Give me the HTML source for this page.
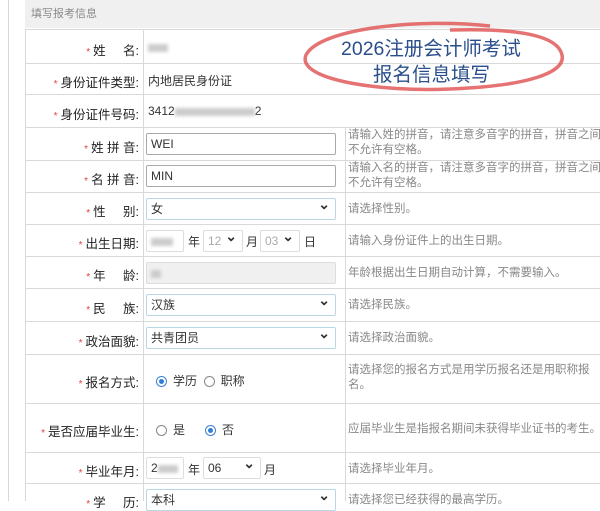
<!DOCTYPE html>
<html><head><meta charset="utf-8"><style>
body{margin:0;width:600px;height:501px;overflow:hidden;background:#fff;font-family:"Liberation Sans","Noto Sans CJK SC",sans-serif;font-size:12px;color:#333;position:relative}
.abs{position:absolute}
.hdr{left:25px;top:0;width:575px;height:28px;background:#f0f0f0;color:#8a8a8a;font-size:11px;line-height:28px;padding-left:6px;box-sizing:border-box}
.vl{position:absolute;width:1px;background:#d9d9d9}
.hl{position:absolute;left:25px;width:575px;height:1px;background:#d9d9d9}
.lab{position:absolute;left:25px;width:114px;text-align:right;color:#222;font-size:12.5px}
.lab b{color:#e04040;font-weight:normal;font-size:10px;margin-right:3px}
.val{position:absolute;left:148px}
.hint{position:absolute;left:348px;color:#888;font-size:11.5px;line-height:15px;width:264px}
.inp{position:absolute;left:146px;width:190px;height:22px;border:1px solid #aaa;border-radius:2px;box-sizing:border-box;padding-left:4px;line-height:20px;background:#fff}
.sel{border-color:#b8d8e8}
.sel:after{content:"⌄";position:absolute;right:5px;top:-5px;font-size:14px;font-weight:bold;color:#333}
.blur{display:inline-block;background:#ccc;filter:blur(1.5px);height:8px;vertical-align:middle}
.rad{display:inline-block;width:11px;height:11px;border:1px solid #888;border-radius:50%;vertical-align:middle;box-sizing:border-box;position:relative;margin-right:6px}
.rad.on{border-color:#3b82d0}
.rad.on:after{content:"";position:absolute;left:2px;top:2px;width:5px;height:5px;border-radius:50%;background:#2f7fd6}
</style></head><body>
<div class="vl" style="left:8px;top:0;height:501px"></div>
<div class="abs hdr">填写报考信息</div>
<div class="vl" style="left:25px;top:29px;height:472px"></div>
<div class="vl" style="left:143px;top:29px;height:472px"></div>
<div class="vl" style="left:345px;top:127px;height:374px"></div>
<div class="hl" style="top:29px"></div><div class="hl" style="top:63px"></div><div class="hl" style="top:94px"></div><div class="hl" style="top:127px"></div><div class="hl" style="top:160px"></div><div class="hl" style="top:192px"></div><div class="hl" style="top:224px"></div><div class="hl" style="top:256px"></div><div class="hl" style="top:288px"></div><div class="hl" style="top:321px"></div><div class="hl" style="top:354px"></div><div class="hl" style="top:403px"></div><div class="hl" style="top:452px"></div><div class="hl" style="top:483px"></div>

<div class="lab" style="top:40px"><b>*</b>姓&nbsp;&nbsp;&nbsp;&nbsp;&nbsp;名:</div><div class="val" style="top:40px"><span class="blur" style="width:20px"></span></div>
<div class="lab" style="top:72px"><b>*</b>身份证件类型:</div><div class="val" style="top:72px">内地居民身份证</div>
<div class="lab" style="top:104px"><b>*</b>身份证件号码:</div><div class="val" style="top:104px">3412<span class="blur" style="width:80px"></span>2</div>

<div class="lab" style="top:137px"><b>*</b>姓 拼 音:</div><div class="inp" style="top:133px">WEI</div><div class="hint" style="top:128px">请输入姓的拼音，请注意多音字的拼音，拼音之间不允许有空格。</div>
<div class="lab" style="top:169px"><b>*</b>名 拼 音:</div><div class="inp" style="top:165px">MIN</div><div class="hint" style="top:161px">请输入名的拼音，请注意多音字的拼音，拼音之间不允许有空格。</div>
<div class="lab" style="top:201px"><b>*</b>性&nbsp;&nbsp;&nbsp;&nbsp;&nbsp;别:</div><div class="inp sel" style="top:198px">女</div><div class="hint" style="top:202px">请选择性别。</div>
<div class="lab" style="top:233px"><b>*</b>出生日期:</div>
<div class="inp" style="top:230px;width:38px;border-color:#ddd"><span class="blur" style="width:22px"></span></div>
<div class="abs" style="left:188px;top:233px">年</div>
<div class="inp sel" style="top:230px;left:203px;width:40px;color:#aaa;border-color:#ddd">12</div>
<div class="abs" style="left:246px;top:233px">月</div>
<div class="inp sel" style="top:230px;left:260px;width:40px;color:#aaa;border-color:#ddd">03</div>
<div class="abs" style="left:304px;top:233px">日</div>
<div class="hint" style="top:234px">请输入身份证件上的出生日期。</div>
<div class="lab" style="top:265px"><b>*</b>年&nbsp;&nbsp;&nbsp;&nbsp;&nbsp;龄:</div><div class="inp" style="top:262px;background:#f0f0f0;border-color:#ddd"><span class="blur" style="width:10px"></span></div><div class="hint" style="top:266px">年龄根据出生日期自动计算，不需要输入。</div>
<div class="lab" style="top:298px"><b>*</b>民&nbsp;&nbsp;&nbsp;&nbsp;&nbsp;族:</div><div class="inp sel" style="top:294px">汉族</div><div class="hint" style="top:298px">请选择民族。</div>
<div class="lab" style="top:331px"><b>*</b>政治面貌:</div><div class="inp sel" style="top:327px">共青团员</div><div class="hint" style="top:331px">请选择政治面貌。</div>
<div class="lab" style="top:372px"><b>*</b>报名方式:</div><div class="val" style="top:372px;left:156px"><span class="rad on"></span>学历&nbsp;&nbsp;<span class="rad"></span>职称</div><div class="hint" style="top:363px">请选择您的报名方式是用学历报名还是用职称报名。</div>
<div class="lab" style="top:421px;left:20px;width:119px"><b>*</b>是否应届毕业生:</div><div class="val" style="top:421px;left:156px"><span class="rad"></span>是&nbsp;&nbsp;&nbsp;&nbsp;&nbsp;&nbsp;<span class="rad on"></span>否</div><div class="hint" style="top:422px">应届毕业生是指报名期间未获得毕业证书的考生。</div>
<div class="lab" style="top:461px"><b>*</b>毕业年月:</div>
<div class="inp" style="top:457px;width:38px;border-color:#ddd">2<span class="blur" style="width:20px"></span></div>
<div class="abs" style="left:188px;top:461px">年</div>
<div class="inp sel" style="top:457px;left:203px;width:58px;border-color:#ddd">06</div>
<div class="abs" style="left:264px;top:461px">月</div>
<div class="hint" style="top:462px">请选择毕业年月。</div>
<div class="lab" style="top:492px"><b>*</b>学&nbsp;&nbsp;&nbsp;&nbsp;&nbsp;历:</div><div class="inp sel" style="top:489px">本科</div><div class="hint" style="top:493px">请选择您已经获得的最高学历。</div>

<svg class="abs" style="left:0;top:0" width="600" height="120"><path d="M490 26 C420 18 320 28 306 55 C296 80 380 92 450 89 C530 86 566 72 562 55 C558 36 520 28 450 30" fill="none" stroke="#e05a5a" stroke-width="3.5" opacity="0.85"/></svg>
<div class="abs" style="left:341px;top:37px;font-size:19.5px;color:#2a4f8c;line-height:24px;white-space:nowrap">2026注册会计师考试</div>
<div class="abs" style="left:373px;top:63px;font-size:19.5px;color:#2a4f8c;line-height:24px;white-space:nowrap">报名信息填写</div>
</body></html>
